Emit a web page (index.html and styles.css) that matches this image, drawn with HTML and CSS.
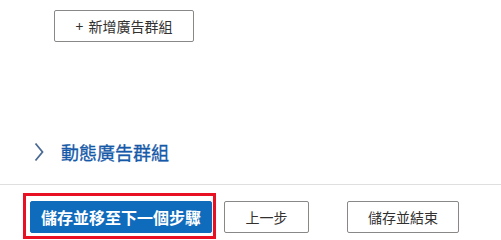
FILE: index.html
```html
<!DOCTYPE html>
<html lang="zh-Hant">
<head>
<meta charset="utf-8">
<link rel="stylesheet" href="styles.css">
</head>
<body>
<div class="page">
  <main class="main">
    <button class="btn add-btn"><span class="plus">+</span>新增廣告群組</button>
    <div class="section-row">
      <svg class="chevron" width="10" height="20" viewBox="0 0 10 20"><path d="M1.5 1.5 L8.5 10 L1.5 18.5" fill="none" stroke="#4a6a94" stroke-width="1.8"/></svg>
      <span class="section-title">動態廣告群組</span>
    </div>
  </main>
  <footer class="footer">
    <div class="highlight">
      <button class="btn primary">儲存並移至下一個步驟</button>
    </div>
    <button class="btn secondary back">上一步</button>
    <button class="btn secondary finish">儲存並結束</button>
  </footer>
</div>
</body>
</html>
```
FILE: styles.css
```css
html, body {
  margin: 0;
  padding: 0;
  background: #ffffff;
}
body {
  width: 501px;
  height: 240px;
  overflow: hidden;
  font-family: "Noto Sans CJK TC", "Noto Sans", sans-serif;
  color: #323130;
}
.page {
  display: flex;
  flex-direction: column;
}
.main {
  height: 184px;
  display: flex;
  flex-direction: column;
  align-items: flex-start;
}
.btn {
  font-family: "Noto Sans CJK TC", "Noto Sans", sans-serif;
  height: 32px;
  box-sizing: border-box;
  border-radius: 2px;
  padding: 0;
  display: flex;
  align-items: center;
  justify-content: center;
  cursor: pointer;
}
.add-btn {
  margin: 10px 0 0 54px;
  width: 140px;
  height: 32px;
  background: #ffffff;
  border: 1px solid #8a8886;
  font-size: 14px;
  color: #323130;
}
.plus {
  margin-right: 5px;
}
.section-row {
  margin: 98px 0 0 34px;
  height: 24px;
  display: flex;
  align-items: center;
}
.chevron {
  display: block;
}
.section-title {
  margin-left: 17px;
  font-size: 18px;
  line-height: 24px;
  color: #1559a8;
  -webkit-text-stroke: 0.3px #1559a8;
}
.footer {
  border-top: 1px solid #e1dfdd;
  padding: 16px 0 0 30px;
  display: flex;
  align-items: flex-start;
}
.highlight {
  position: relative;
}
.highlight::after {
  content: "";
  position: absolute;
  left: -7px;
  top: -8px;
  right: -4px;
  bottom: -6px;
  border: 3px solid #e81123;
  pointer-events: none;
}
.primary {
  width: 182px;
  background: #0f6cbd;
  border: 1px solid #0f6cbd;
  color: #ffffff;
  font-size: 16px;
  font-weight: bold;
}
.secondary {
  background: #ffffff;
  border: 1px solid #8a8886;
  color: #323130;
  font-size: 14px;
}
.back {
  margin-left: 12px;
  width: 85px;
}
.finish {
  margin-left: 38px;
  width: 112px;
}
```
